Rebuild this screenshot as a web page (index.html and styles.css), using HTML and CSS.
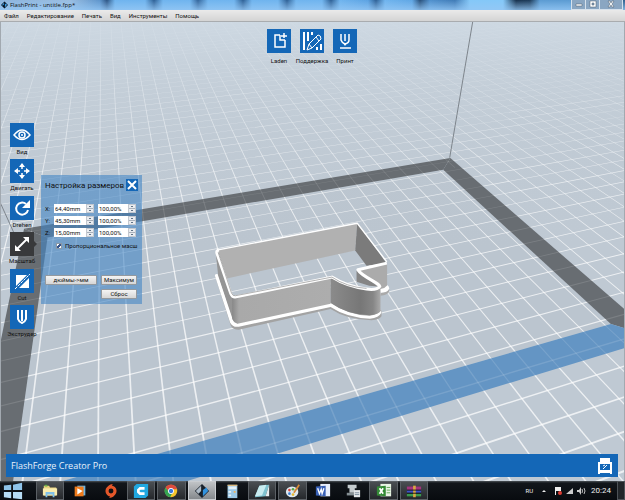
FILE: index.html
```html
<!DOCTYPE html>
<html lang="ru">
	<head>
		<meta charset="utf-8">
		<meta name="viewport" content="width=device-width,initial-scale=1">
		<title>FlashPrint - untitle.fpp*</title>
		<link rel="stylesheet" href="styles.css">
	</head>
	<body>
		<header class="titlebar">
			<svg class="logo" viewBox="0 0 20 20"><path fill="#07101c" d="M10 0l10 10-10 10L0 10z"/><path fill="#3d9be0" d="M9 3v5l-4 4-2-2zM11 8l4-3 2 5-6 7z"/></svg>
			<span class="title">FlashPrint - untitle.fpp*</span>
			<div class="win-btns">
				<button type="button" aria-label="Свернуть"><svg viewBox="0 0 14 9"><path d="M4 4h6v2H4z"/></svg></button>
				<button type="button" aria-label="Развернуть"><svg viewBox="0 0 14 9"><path fill-rule="evenodd" d="M4 1h6v6H4zM6 3v2h2V3z"/></svg></button>
				<button type="button" class="wide" aria-label="Закрыть"><svg viewBox="0 0 14 9"><path d="M4 1h2l1 2 1-2h2L8 4l2 3H8L7 5 6 7H4l2-3z"/></svg></button>
			</div>
		</header>
		<nav class="menu">
			<button type="button">Файл</button>
			<button type="button">Редактирование</button>
			<button type="button">Печать</button>
			<button type="button">Вид</button>
			<button type="button">Инструменты</button>
			<button type="button">Помощь</button>
		</nav>

		<main class="stage">
			<svg class="scene" viewBox="0 21 625 460" preserveAspectRatio="xMidYMid slice">
				<defs>
					<linearGradient id="haze" x1="0" y1="0" x2="0" y2="1">
						<stop offset="0" stop-color="#cfdae4" stop-opacity=".9"/>
						<stop offset=".15" stop-color="#c8d3dd" stop-opacity=".5"/>
						<stop offset=".35" stop-color="#c1ccd6" stop-opacity=".1"/>
						<stop offset=".5" stop-color="#c1ccd6" stop-opacity="0"/>
					</linearGradient>
					<linearGradient id="tail" x1="0" y1="0" x2="1" y2="0">
						<stop offset="0" stop-color="#8b8b8b"/>
						<stop offset=".6" stop-color="#777"/>
						<stop offset=".85" stop-color="#868686"/>
						<stop offset="1" stop-color="#aaa"/>
					</linearGradient>
					<linearGradient id="front" x1="0" y1="0" x2="1" y2="0">
						<stop offset="0" stop-color="#888"/>
						<stop offset=".07" stop-color="#a9a9a9"/>
						<stop offset="1" stop-color="#adadad"/>
					</linearGradient>
				</defs>
				<g id="floor"></g>
				<rect class="haze" y="21" width="625" height="460"/>
				<g id="bands"></g>
				<path class="pole" d="M450 157L473 21M0 203L14 234"/>
				<!-- cookie cutter -->
				<g transform="translate(200 210) scale(.3333)">
					<path fill="#a3a3a3" d="M45 198L92 346q6 12 24 12L392 296Q440 328 515 330q24-2 30-12V300L390 276 110 336 58 190z"/>
					<path fill="#fff" d="M44 196q0-8 10-4L100 330q4 8 16 6L392 276Q445 315 510 316q30-4 34-16v8q-6 14-34 17Q440 322 392 290L116 349q-18 3-26-12zM536 222h24q10 6 8 14-2 10-26 12z"/>
					<path fill="#aaa" d="M542 248q22-1 26-12v8q-6 10-26 12z"/>
					<path fill="#b1b1b1" d="M52 118L472 38 466 120 80 204z"/>
					<path fill="#7b7b7b" d="M472 38L560 158 500 166 466 120z"/>
					<path fill="#858585" d="M470 180L535 228 508 226 470 214z"/>
					<path fill="#ababab" d="M474 180L562 160V225q-8 10-20 11z"/>
					<path fill="#959595" d="M46 122L100 262 112 340 96 322 54 196z"/>
					<path fill="url(#front)" d="M96 262L392 200V280L112 340q-10-2-16-14z"/>
					<path fill="url(#tail)" d="M392 200Q450 238 542 234V300q-6 14-34 15Q440 312 392 278z"/>
					<path class="rim-thin" d="M54 118L472 38 561 154"/>
					<path class="rim" d="M561 158L474 178Q480 190 520 212 538 222 540 228 532 240 500 236 440 228 396 200L104 260Q96 260 92 250L50 128Q48 120 56 118"/>
					<path class="rim-line" d="M54 126L94 248Q98 258 106 256L396 200Q440 230 500 234"/>
				</g>
			</svg>

			<div class="toolbar top">
				<div class="tool">
					<button type="button" aria-labelledby="l-load"><svg viewBox="0 0 24 24"><path stroke-width="1.500" d="M13 6H8v12h10v-7M13 6v5h5M17 4v5M14 7h6"/></svg></button>
					<span id="l-load">Laden</span>
				</div>
				<div class="tool">
					<button type="button" aria-labelledby="l-sup"><svg viewBox="0 0 24 24"><path d="M4 3v18M8 3v9M12 3v3M17 21v-3M21 21v-6" stroke-width="2"/><path stroke-width="1" d="M7 21l2-6 9-9q3 0 3 4l-9 9zM9 15l3 4M16 8l3 4"/></svg></button>
					<span id="l-sup">Поддержка</span>
				</div>
				<div class="tool">
					<button type="button" aria-labelledby="l-print"><svg viewBox="0 0 24 24"><path stroke-width="1.500" d="M8 5v6q1 3 4 4 4-1 4-4V5M12 5v7M7 19h11"/><path d="M10 14h4l-2 3z" fill="#fff" stroke="none"/></svg></button>
					<span id="l-print">Принт</span>
				</div>
			</div>

			<div class="toolbar side">
				<div class="tool">
					<button type="button" aria-labelledby="l-view"><svg viewBox="0 0 24 24"><path stroke-width="1.500" d="M4 12q8-10 16 0-8 9-16 0z"/><circle cx="12" cy="12" r="3" stroke-width="1.500"/><circle cx="12" cy="12" r="1" fill="#fff" stroke="none"/></svg></button>
					<span id="l-view">Вид</span>
				</div>
				<div class="tool">
					<button type="button" aria-labelledby="l-move"><svg viewBox="0 0 24 24"><path d="M12 5v5M12 14v5M5 12h5M14 12h5" stroke-width="1.500"/><path fill="#fff" stroke="none" d="M12 4l3 4H9zM12 20l3-4H9zM4 12l4-3v6zM20 12l-4-3v6z"/></svg></button>
					<span id="l-move">Двигать</span>
				</div>
				<div class="tool">
					<button type="button" aria-labelledby="l-rot"><svg viewBox="0 0 24 24"><path d="M16 8a6 6 0 1 0 2 6"/><path fill="#fff" stroke="none" d="M20 4v8h-8z"/></svg></button>
					<span id="l-rot">Drehen</span>
				</div>
				<div class="tool active">
					<button type="button" aria-labelledby="l-scale"><svg viewBox="0 0 24 24"><path d="M7 17L17 7"/><path fill="#fff" stroke="none" d="M13 5h6v6zM5 13v6h6z"/></svg></button>
					<span id="l-scale">Масштаб</span>
				</div>
				<div class="tool">
					<button type="button" aria-labelledby="l-cut"><svg viewBox="0 0 24 24"><path fill="#fff" stroke="none" d="M6 6h11L6 17zM19 9v10H9z"/><path stroke-width="1" stroke-dasharray="3 1" d="M5 20L20 5"/></svg></button>
					<span id="l-cut">Cut</span>
				</div>
				<div class="tool">
					<button type="button" aria-labelledby="l-ext"><svg viewBox="0 0 24 24"><path d="M8 5v9q1 3 4 4 3-1 4-4V5M12 5v11"/></svg></button>
					<span id="l-ext">Экструдер</span>
				</div>
			</div>

			<form class="panel">
				<div class="panel-head">
					<h1>Настройка размеров</h1>
					<button type="button" class="close" aria-label="Закрыть"><svg viewBox="0 0 12 12"><path d="M2 2l8 8M10 2l-8 8"/></svg></button>
				</div>
				<div class="row">
					<label for="x">X:</label>
					<span class="spin"><input id="x" type="text" value="64,40mm"><i></i></span>
					<span class="spin"><input type="text" aria-label="X, %" value="100,00%"><i></i></span>
				</div>
				<div class="row">
					<label for="y">Y:</label>
					<span class="spin"><input id="y" type="text" value="45,30mm"><i></i></span>
					<span class="spin"><input type="text" aria-label="Y, %" value="100,00%"><i></i></span>
				</div>
				<div class="row">
					<label for="z">Z:</label>
					<span class="spin"><input id="z" type="text" value="15,00mm"><i></i></span>
					<span class="spin"><input type="text" aria-label="Z, %" value="100,00%"><i></i></span>
				</div>
				<div class="check">
					<input id="prop" type="checkbox" checked>
					<label for="prop">Пропорциональное масш</label>
				</div>
				<div class="actions">
					<button type="button">дюймы-&gt;мм</button>
					<button type="button">Максимум</button>
					<button type="button" class="reset">Сброс</button>
				</div>
			</form>

			<footer class="status">
				<span>FlashForge Creator Pro</span>
				<svg viewBox="0 0 16 18"><path fill="#fff" fill-rule="evenodd" d="M3 1h10v4h2v12h-2v-1H3v1H1V5h2zM3 7v6h10V7z"/><path fill="none" stroke="#fff" d="M6 12l4-4M6 9l2-1"/></svg>
			</footer>
		</main>

		<div class="taskbar">
			<button type="button" class="start" aria-label="Пуск"><svg viewBox="0 0 22 18"><path fill="#8fc4ea" d="M1 3l8-1v6H1zM11 2l10-2v8H11z"/><path fill="#b6dcf5" d="M1 10h8v7l-8-1zM11 10h10v8l-10-1z"/></svg></button>
			<div class="apps">
				<button type="button" class="open" aria-label="Проводник"><svg viewBox="0 0 18 18"><path fill="#e9d27c" d="M2 3h6l1 2h7v9H2z"/><path fill="#6ab04a" d="M3 2h3v2H3z"/><path fill="#f8ecae" d="M1 6h16v8H1z"/><path fill="#7fc0e8" d="M4 10h10v6h-2v-3H6v3H4z"/></svg></button>
				<button type="button" aria-label="Плеер"><svg viewBox="0 0 18 18"><path fill="#6fb3de" d="M6 3h9v11H6z"/><path fill="#ee7b1c" d="M3 4h10v11H3z"/><path fill="#fff" d="M6 6l6 3-6 4z"/></svg></button>
				<button type="button" aria-label="Origin"><svg viewBox="0 0 18 18"><circle cx="9" cy="9" r="4.500" fill="none" stroke="#e4572a" stroke-width="3.500"/><path fill="#e4572a" d="M5 6q0-4 6-5L9 5zM13 12q0 4-6 5l2-4z"/></svg></button>
				<button type="button" class="open" aria-label="Cura"><svg viewBox="0 0 18 18"><path fill="#21a8e0" d="M4 1h13v13l-3 3H1V4z"/><path fill="none" stroke="#fff" stroke-width="3" d="M13 6H8L6 8v2l2 2h5"/></svg></button>
				<button type="button" class="open" aria-label="Chrome"><svg viewBox="0 0 18 18"><circle cx="9" cy="9" r="7" fill="#f5c52c"/><path fill="#dd4b3e" d="M3 5a7 7 0 0 1 12 0l1 2H9L6 10z"/><path fill="#35a453" d="M3 5l4 6 3 1-2 4A7 7 0 0 1 3 5z"/><circle cx="9" cy="9" r="3" fill="#3b78dd" stroke="#fff"/></svg></button>
				<button type="button" class="open current" aria-label="FlashPrint"><svg viewBox="0 0 18 18"><path fill="#17202b" d="M9 1l8 8-8 8-8-8z"/><path fill="#aebbc7" d="M8 3v6l-3 3-3-3z"/><path fill="#3293df" d="M10 8l4-3 2 4-6 6z"/></svg></button>
				<button type="button" aria-label="Калькулятор"><svg viewBox="0 0 18 18"><path fill="#9cc9e6" d="M4 2h11v15H4z"/><path fill="#e5f2fa" d="M5 4h9v3H5zM5 9h3v2H5zM5 13h3v2H5z"/><path fill="#f0b25b" d="M4 2h11v1H4zM11 9h2v2h-2z"/></svg></button>
				<button type="button" class="open" aria-label="Блокнот"><svg viewBox="0 0 18 18"><path fill="#7fc3d0" d="M6 3l11-1-4 13-12 1z"/><path fill="#c9ecf0" d="M6 3l8-1-5 12-8 1z"/><path fill="#e8eef0" d="M13 15l4-13v13z"/></svg></button>
				<button type="button" class="open" aria-label="Paint"><svg viewBox="0 0 18 18"><ellipse cx="8" cy="10" rx="7" ry="6" fill="#dfe9f0"/><circle cx="5" cy="8" r="1.500" fill="#d4443b"/><circle cx="9" cy="7" r="1.500" fill="#56a845"/><circle cx="5" cy="12" r="1.500" fill="#3b7fd1"/><circle cx="9" cy="13" r="1.500" fill="#e5b932"/><path stroke="#d88b36" stroke-width="2" d="M16 2l-6 9"/></svg></button>
				<button type="button" aria-label="Word"><svg viewBox="0 0 18 18"><path fill="#e7eefb" d="M6 1h11v14H6z"/><path fill="#3860b5" d="M1 4l11-1v12L1 14z"/><path fill="none" stroke="#fff" stroke-width="1.500" d="M3 6l2 6 2-5 1 5 2-6"/></svg></button>
				<button type="button" aria-label="Принтер"><svg viewBox="0 0 18 18"><path fill="#c3cacd" d="M3 2h10v4H3zM5 6h6v5H5z"/><path fill="#848e92" d="M2 11h12v3H2z"/><path fill="#e4e8ea" d="M10 8h7v8h-7z"/><path stroke="#789" d="M11 11h5M11 13h5"/></svg></button>
				<button type="button" class="open" aria-label="Excel"><svg viewBox="0 0 18 18"><path fill="#e9f4e5" d="M5 1h12v14H5z"/><path stroke="#58a34f" d="M12 5h4M12 8h4M12 11h4"/><path fill="#348a36" d="M1 4l10-1v12L1 14z"/><path stroke="#fff" stroke-width="2" d="M4 6l4 6M8 6l-4 6"/></svg></button>
				<button type="button" class="open" aria-label="WinRAR"><svg viewBox="0 0 18 18"><path fill="#a2347d" d="M1 4h16v4H1z"/><path fill="#3f51c8" d="M1 8h16v3H1z"/><path fill="#3a9a4c" d="M1 12h16v3H1z"/><path fill="#d9a743" d="M8 3h3v13H8z"/><path stroke="#111" d="M1 8h16M1 11.500h16"/></svg></button>
			</div>
			<div class="tray">
				<span class="lang">RU</span>
				<svg viewBox="0 0 48 10">
					<path fill="#eee" d="M4 6l2-2 2 2zM17 1h1v8h-1zM18 1h5v4h-5z"/>
					<circle cx="22" cy="7" r="2" fill="#dc3c32"/>
					<path fill="#ccc" d="M28 8l7-6v6zM39 4h2l2-3v8l-2-3h-2z"/>
					<path fill="none" stroke="#bbb" d="M44 3q1 2 0 4M46 2q2 3 0 6"/>
				</svg>
				<time>20:24</time>
			</div>
			<button type="button" class="desktop" aria-label="Свернуть все окна"></button>
		</div>
		<script src="scene.js"></script>
	</body>
</html>
```
FILE: styles.css
```css
*{
	box-sizing: border-box;
}
body{
	margin: 0;
	height: 100vh;
	display: flex;
	flex-direction: column;
	overflow: hidden;
	font: 6px/10px Roboto, "Noto Sans", sans-serif;
	color: #111;
}
button{
	margin: 0;
	padding: 0;
	border: 0;
	background: none;
	font: inherit;
	color: inherit;
}
svg{
	display: block;
}
.titlebar{
	flex: none;
	height: 10px;
	display: flex;
	align-items: center;
	gap: 2px;
	padding-left: 1px;
	background:
		linear-gradient(rgba(255,255,255,0), rgba(150,200,245,.8)),
		linear-gradient(90deg, #8db4dc 0, #9abde0 70px, #5d94cb 100px, #2b5382 107px, #6fb4ee 115px, #6fb4ee 145px, #2d5f94 154px, #6fb4ee 163px, #6fb4ee 190px, #32649a 198px, #6fb4ee 208px, #6fb4ee 234px, #2d5f94 243px, #6fb4ee 252px, #6fb4ee 278px, #2d5f94 287px, #6fb4ee 296px, #6fb4ee 322px, #2d5f94 331px, #6fb4ee 340px, #5ba2e2 368px, #2d5f94 376px, #6fb4ee 385px, #5fa6e4 412px, #274e78 420px, #4f90cd 430px, #3f7ab5 455px, #84c8f8 470px, #84c8f8 503px, #16304c 516px, #1c3a58 530px, #5b9bd2 540px, #5b9bd2 570px, #31608c 580px);
}
.logo{
	width: 7px;
	height: 8px;
}
.title{
	flex: 1;
	font-family: "Open Sans", sans-serif;
}
.win-btns{
	display: flex;
	align-self: stretch;
	margin-right: 2px;
	background: #8aa6c2;
	border: solid #d6e1ec;
	border-width: 0 1px 1px;
}
.win-btns button{
	width: 14px;
	border-right: 1px solid #d6e1ec;
}
.win-btns .wide{
	width: 22px;
	border: 0;
}
.win-btns svg{
	width: 14px;
	height: 9px;
	margin: 0 auto;
	fill: #fff;
	stroke: #4a5a6b;
	stroke-width: .5;
}
.menu{
	flex: none;
	height: 12px;
	display: flex;
	gap: 8px;
	padding-left: 4px;
	background: linear-gradient(#eaeaea, #d4d4d4);
	border-bottom: 1px solid #a9acaf;
}
.stage{
	flex: 1;
	position: relative;
	display: flex;
	flex-direction: column;
	min-height: 0;
	padding: 7px 6px 4px 5px;
	background: #bfc9d3;
	border: solid #a2a9b0;
	border-width: 0 1px;
}
.scene{
	position: absolute;
	top: 0;
	left: 0;
	width: 100%;
	height: 100%;
}
.plate{
	fill: #bbc5cf;
}
.band{
	fill: #686d72;
}
.band-front{
	fill: #6495c4;
}
.line{
	fill: #fff;
	opacity: .72;
}
.line-band{
	fill: #fff;
	opacity: .13;
}
.haze{
	fill: url(#haze);
}
.pole{
	fill: none;
	stroke: #7d858c;
}
.rim, .rim-thin{
	fill: none;
	stroke: #fff;
	stroke-width: 9;
	stroke-linejoin: round;
}
.rim-thin{
	stroke-width: 4;
}
.rim-line{
	fill: none;
	stroke: #8c8c8c;
	stroke-width: 2;
	stroke-linejoin: round;
}
.toolbar{
	position: relative;
	display: flex;
}
.toolbar.top{
	justify-content: center;
	gap: 9px;
}
.toolbar.side{
	flex-direction: column;
	justify-content: space-between;
	width: 24px;
	height: 216px;
	margin: 57px 0 0 4px;
}
.tool{
	width: 24px;
	display: flex;
	flex-direction: column;
	align-items: center;
	white-space: nowrap;
}
.tool button{
	width: 24px;
	height: 24px;
	background: #1467b7;
}
.toolbar.top .tool{
	gap: 3px;
}
.tool svg{
	width: 24px;
	height: 24px;
	fill: none;
	stroke: #fff;
	stroke-width: 2;
}
.tool.active button{
	position: relative;
	background: #38393b;
}
.tool.active button:after{
	content: '';
	position: absolute;
	left: 24px;
	top: 9px;
	border: 3px solid transparent;
	border-left-color: #38393b;
	border-right: 0;
}
.panel{
	position: absolute;
	left: 40px;
	top: 153px;
	width: 101px;
	padding: 4px 4px 5px;
	background: rgba(66,134,196,.6);
}
.panel-head{
	display: flex;
	justify-content: space-between;
	height: 25px;
}
.panel h1{
	margin: 0;
	font-size: 8px;
	line-height: 14px;
	font-weight: normal;
	white-space: nowrap;
}
.close{
	width: 12px;
	height: 12px;
	background: #1467b7;
}
.close svg{
	stroke: #fff;
	stroke-width: 2;
}
.row{
	display: grid;
	grid-template-columns: 5px 40px 38px;
	column-gap: 4px;
	height: 12px;
}
.spin{
	display: flex;
	height: 9px;
	background: #fff;
}
.spin input{
	flex: 1;
	min-width: 0;
	padding: 0 0 0 1px;
	border: 0;
	background: none;
	font: inherit;
	line-height: 9px;
	color: inherit;
}
.spin i{
	width: 8px;
	border: 1px solid #c3c8cf;
	background:
		linear-gradient(#5f7286, #5f7286) 50% 1px/2px 1px no-repeat,
		linear-gradient(#5f7286, #5f7286) 50% 5px/2px 1px no-repeat,
		linear-gradient(#e9ecf0 45%, #aab2bc 45%, #aab2bc 55%, #e9ecf0 55%);
}
.check{
	display: flex;
	align-items: center;
	gap: 3px;
	height: 10px;
	margin: 1px 0 0 11px;
	white-space: nowrap;
}
.check input{
	flex: none;
	appearance: none;
	width: 6px;
	height: 6px;
	margin: 0;
	background: #eef1f4;
	border: 1px solid #8b98a5;
}
.check input:checked{
	background: linear-gradient(135deg, #fff 35%, #35548c 35%, #35548c 65%, #fff 65%);
}
.actions{
	display: grid;
	grid-template-columns: 52px 36px;
	gap: 4px;
	margin-top: 24px;
}
.actions button{
	height: 10px;
	line-height: 8px;
	background: linear-gradient(#f4f4f4, #d6d6d6);
	border: 1px solid #94999e;
	border-radius: 1px;
}
.actions .reset{
	grid-column: 2;
}
.status{
	position: relative;
	display: flex;
	align-items: center;
	justify-content: space-between;
	height: 23px;
	margin-top: auto;
	padding: 0 5px;
	background: #1467b7;
	color: #e8f1fa;
	font-family: "Open Sans", sans-serif;
	font-size: 9px;
}
.status svg{
	width: 16px;
	height: 18px;
}
.taskbar{
	flex: none;
	display: flex;
	align-items: stretch;
	height: 19px;
	background: linear-gradient(#4c5257 0, #12161b 2px, #080b0f 100%);
	color: #eee;
}
.start{
	width: 25px;
	margin-right: 11px;
}
.start svg{
	width: 20px;
	height: 18px;
	margin: 0 auto;
}
.apps{
	flex: 0 0 392px;
	display: grid;
	grid-template-columns: repeat(13, 1fr);
	gap: 2px;
}
.apps svg{
	width: 16px;
	height: 16px;
	margin: 0 auto;
}
.apps .open{
	border: 1px solid #5b6065;
	background: linear-gradient(#4a4e52, #25282c);
}
.apps .current{
	background: linear-gradient(#c0c3c6, #85898d);
	border-color: #c9ccd0;
}
.tray{
	flex: 1;
	display: flex;
	align-items: center;
	justify-content: flex-end;
	gap: 5px;
	padding-right: 6px;
}
.tray svg{
	width: 48px;
	height: 10px;
}
.tray time{
	font-size: 8px;
}
.desktop{
	width: 8px;
	background: #22262a;
	border: 1px solid #4d5257;
}
```
FILE: scene.js
```js
// build plate: 20 x 12 cells with a quarter of a cell round them
var NS = 'http://www.w3.org/2000/svg';
var COLS = 20, ROWS = 12, EDGE = 0.25, BAND = 1.1;

// plate corners on the screen: front left, front right, back right, back left
var world = [[0, 1], [COLS + EDGE, -EDGE], [COLS + EDGE, ROWS + EDGE], [-EDGE, ROWS + EDGE]];
var screenPts = [[25.5, 452.7], [611.5, 323.7], [443.5, 169], [47, 237]];

function solve(a) {
	var n = a.length;
	for (var i = 0; i < n; i++) {
		var p = i;
		for (var r = i; r < n; r++) if (Math.abs(a[r][i]) > Math.abs(a[p][i])) p = r;
		var t = a[i]; a[i] = a[p]; a[p] = t;
		for (r = 0; r < n; r++) {
			if (r === i) continue;
			var f = a[r][i] / a[i][i];
			for (var c = i; c <= n; c++) a[r][c] -= f * a[i][c];
		}
	}
	return a.map(function (row, k) { return row[n] / row[k]; });
}

var eqs = [];
world.forEach(function (w, i) {
	var u = w[0], v = w[1], x = screenPts[i][0], y = screenPts[i][1];
	eqs.push([u, v, 1, 0, 0, 0, -u * x, -v * x, x]);
	eqs.push([0, 0, 0, u, v, 1, -u * y, -v * y, y]);
});
var h = solve(eqs);

function depth(u, v) { return h[6] * u + h[7] * v + 1; }
function project(u, v) {
	var w = depth(u, v);
	return [(h[0] * u + h[1] * v + h[2]) / w, (h[3] * u + h[4] * v + h[5]) / w];
}
function poly(parent, cls, pts) {
	var el = document.createElementNS(NS, 'polygon');
	el.setAttribute('class', cls);
	el.setAttribute('points', pts.map(function (p) {
		return project(p[0], p[1]).map(function (n) { return n.toFixed(2); }).join(',');
	}).join(' '));
	parent.appendChild(el);
}

var floor = document.getElementById('floor');
var bands = document.getElementById('bands');
var l = -EDGE, r = COLS + EDGE, f = -EDGE, b = ROWS + EDGE;
var L = l - BAND, R = r + BAND, F = f - BAND, B = b + BAND;

poly(floor, 'plate', [[l, f], [r, f], [r, b], [l, b]]);

// a strip along one grid line, cut off where it would pass behind the camera
function strip(parent, cls, k, from, to, isCol) {
	var half = 0.026;
	function at(t, d) { return isCol ? [k + d, t] : [t, k + d]; }
	while (from < to && depth.apply(null, at(from, 0)) < 0.1) from++;
	while (to > from && depth.apply(null, at(to, 0)) < 0.1) to--;
	if (from < to) poly(parent, cls, [at(from, -half), at(to, -half), at(to, half), at(from, half)]);
}
for (var k = -40; k <= 70; k++) {
	strip(floor, 'line', k, -20, 90, true);
	strip(floor, 'line', k, -60, 90, false);
}
[
	['band', [[l, b], [r, b], [R, B], [L, B]]],
	['band', [[r, f], [r, b], [R, B], [R, F]]],
	['band', [[l, f], [l, b], [L, B], [L, F]]],
	['band-front', [[l, f], [r, f], [R, F], [L, F]]]
].forEach(function (p) { poly(bands, p[0], p[1]); });

// faint lines over the bands
for (k = -1; k <= COLS + 1; k++) {
	strip(bands, 'line-band', k, F, f, true);
	strip(bands, 'line-band', k, b, B, true);
}
for (k = -1; k <= ROWS + 1; k++) {
	strip(bands, 'line-band', k, L, l, false);
	strip(bands, 'line-band', k, r, R, false);
}
strip(bands, 'line-band', -1, l, r, false);
strip(bands, 'line-band', ROWS + 1, l, r, false);
```
